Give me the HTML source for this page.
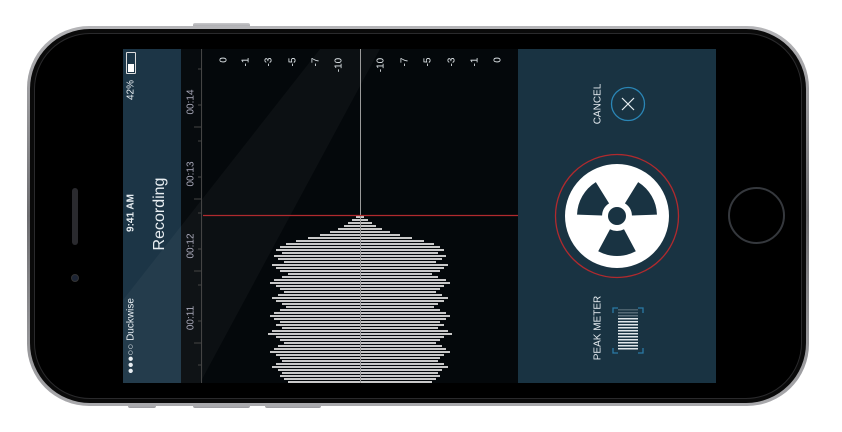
<!DOCTYPE html>
<html><head><meta charset="utf-8"><style>
*{margin:0;padding:0;box-sizing:border-box}
body{width:842px;height:432px;background:#fff;position:relative;overflow:hidden;font-family:"Liberation Sans",sans-serif}
.abs{position:absolute}
.rot{position:absolute;transform:translate(-50%,-50%) rotate(-90deg);white-space:nowrap;color:#e8eef2}
.btn{position:absolute;background:linear-gradient(#c9c9cc,#9a9a9e);border-radius:2px}
</style></head><body>
<div class="btn" style="left:193px;top:23px;width:57px;height:5px"></div>
<div class="btn" style="left:128px;top:403px;width:28px;height:5px"></div>
<div class="btn" style="left:193px;top:403px;width:57px;height:5px"></div>
<div class="btn" style="left:265px;top:403px;width:56px;height:5px"></div>
<div class="abs" style="left:27px;top:26px;width:782px;height:380px;border-radius:62px;background:linear-gradient(180deg,#b5b5b8,#6d6d70 50%,#a9a9ac);"></div>
<div class="abs" style="left:30px;top:29px;width:776px;height:374px;border-radius:60px;background:#0a0a0a"></div>
<div class="abs" style="left:34px;top:33px;width:768px;height:366px;border-radius:56px;background:#000;border:1px solid #2a2a2c"></div>
<div class="abs" style="left:72px;top:188px;width:6px;height:57px;border-radius:3px;background:#2a2a2e"></div>
<div class="abs" style="left:71px;top:274px;width:8px;height:8px;border-radius:50%;background:#1c2434;border:1px solid #333"></div>
<div class="abs" style="left:728px;top:187px;width:57px;height:57px;border-radius:50%;border:2px solid #35383d"></div>

<!-- screen -->
<div class="abs" style="left:123px;top:49px;width:58px;height:334px;background:#1c3546"></div>
<div class="abs" style="left:181px;top:49px;width:22px;height:334px;background:#070b0e"></div>
<div class="abs" style="left:203px;top:49px;width:315px;height:334px;background:#04080b"></div>
<div class="abs" style="left:518px;top:49px;width:198px;height:334px;background:#193342"></div>
<!-- glare -->
<svg class="abs" style="left:0;top:0" width="842" height="432"><polygon points="123,383 123,300 320,49 380,49 200,383" fill="#ffffff" opacity="0.035"/></svg>

<!-- ruler -->
<svg class="abs" style="left:181px;top:49px" width="22" height="334">
<line x1="20.5" y1="0" x2="20.5" y2="334" stroke="#444" stroke-width="1"/>
<g stroke="#444">
<line x1="17" x2="21" y1="20" y2="20"/><line x1="17" x2="21" y1="56" y2="56"/><line x1="13" x2="21" y1="78" y2="78"/>
<line x1="17" x2="21" y1="92" y2="92"/><line x1="17" x2="21" y1="128" y2="128"/><line x1="13" x2="21" y1="150" y2="150"/>
<line x1="17" x2="21" y1="164" y2="164"/><line x1="17" x2="21" y1="200" y2="200"/><line x1="13" x2="21" y1="222" y2="222"/>
<line x1="17" x2="21" y1="236" y2="236"/><line x1="17" x2="21" y1="272" y2="272"/><line x1="13" x2="21" y1="294" y2="294"/><line x1="17" x2="21" y1="316" y2="316"/></g>
</svg>
<div class="rot" style="left:191px;top:102px;font-size:10px;color:#aab">00:14</div>
<div class="rot" style="left:191px;top:174px;font-size:10px;color:#aab">00:13</div>
<div class="rot" style="left:191px;top:246px;font-size:10px;color:#aab">00:12</div>
<div class="rot" style="left:191px;top:318px;font-size:10px;color:#aab">00:11</div>

<!-- dB labels -->
<div class="rot" style="left:224px;top:60px;font-size:10px">0</div>
<div class="rot" style="left:246px;top:62px;font-size:10px">-1</div>
<div class="rot" style="left:269px;top:62px;font-size:10px">-3</div>
<div class="rot" style="left:293px;top:62px;font-size:10px">-5</div>
<div class="rot" style="left:316px;top:62px;font-size:10px">-7</div>
<div class="rot" style="left:339px;top:65px;font-size:10px">-10</div>
<div class="rot" style="left:381px;top:65px;font-size:10px">-10</div>
<div class="rot" style="left:405px;top:62px;font-size:10px">-7</div>
<div class="rot" style="left:428px;top:62px;font-size:10px">-5</div>
<div class="rot" style="left:452px;top:62px;font-size:10px">-3</div>
<div class="rot" style="left:475px;top:62px;font-size:10px">-1</div>
<div class="rot" style="left:498px;top:60px;font-size:10px">0</div>

<!-- waveform -->
<svg class="abs" style="left:0;top:0" width="842" height="432">
<g fill="#c9c9c9">
<rect x="356" y="216" width="8" height="2"/><rect x="352" y="219" width="16" height="2"/><rect x="348" y="222" width="24" height="2"/><rect x="344" y="225" width="32" height="2"/><rect x="338" y="228" width="44" height="2"/><rect x="330" y="231" width="60" height="2"/><rect x="320" y="234" width="80" height="2"/><rect x="308" y="237" width="104" height="2"/><rect x="296" y="240" width="128" height="2"/><rect x="286" y="243" width="148" height="2"/><rect x="280" y="246" width="160" height="2"/><rect x="276" y="249" width="168" height="2"/><rect x="282" y="252" width="156" height="2"/><rect x="274" y="255" width="172" height="2"/><rect x="278" y="258" width="164" height="2"/><rect x="284" y="261" width="152" height="2"/><rect x="272" y="264" width="176" height="2"/><rect x="276" y="267" width="168" height="2"/><rect x="280" y="270" width="160" height="2"/><rect x="288" y="273" width="144" height="2"/><rect x="282" y="276" width="156" height="2"/><rect x="274" y="279" width="172" height="2"/><rect x="270" y="282" width="180" height="2"/><rect x="276" y="285" width="168" height="2"/><rect x="280" y="288" width="160" height="2"/><rect x="284" y="291" width="152" height="2"/><rect x="278" y="294" width="164" height="2"/><rect x="272" y="297" width="176" height="2"/><rect x="276" y="300" width="168" height="2"/><rect x="282" y="303" width="156" height="2"/><rect x="286" y="306" width="148" height="2"/><rect x="280" y="309" width="160" height="2"/><rect x="274" y="312" width="172" height="2"/><rect x="270" y="315" width="180" height="2"/><rect x="274" y="318" width="172" height="2"/><rect x="280" y="321" width="160" height="2"/><rect x="276" y="324" width="168" height="2"/><rect x="282" y="327" width="156" height="2"/><rect x="272" y="330" width="176" height="2"/><rect x="268" y="333" width="184" height="2"/><rect x="276" y="336" width="168" height="2"/><rect x="280" y="339" width="160" height="2"/><rect x="284" y="342" width="152" height="2"/><rect x="278" y="345" width="164" height="2"/><rect x="274" y="348" width="172" height="2"/><rect x="270" y="351" width="180" height="2"/><rect x="276" y="354" width="168" height="2"/><rect x="280" y="357" width="160" height="2"/><rect x="282" y="360" width="156" height="2"/><rect x="276" y="363" width="168" height="2"/><rect x="272" y="366" width="176" height="2"/><rect x="278" y="369" width="164" height="2"/><rect x="282" y="372" width="156" height="2"/><rect x="280" y="375" width="160" height="2"/><rect x="284" y="378" width="152" height="2"/><rect x="288" y="381" width="144" height="2"/>
</g>
<line x1="360.5" y1="49" x2="360.5" y2="383" stroke="#9a9a9a" stroke-width="1"/>
<line x1="203" y1="215.5" x2="518" y2="215.5" stroke="#b02a2e" stroke-width="1.3"/>
</svg>

<!-- left panel text -->
<div class="abs" style="left:126px;top:52px;width:10px;height:22px;border:1px solid #ddd;border-radius:1px"></div>
<div class="abs" style="left:128px;top:64px;width:6px;height:8px;background:#fff"></div>
<div class="rot" style="left:131px;top:90px;font-size:10px">42%</div>
<div class="rot" style="left:131px;top:213px;font-size:10px;font-weight:bold">9:41 AM</div>
<div class="rot" style="left:131px;top:336px;font-size:10px">●●●○○ Duckwise</div>
<div class="rot" style="left:160px;top:214px;font-size:16px;font-weight:300">Recording</div>

<!-- right panel -->
<div class="rot" style="left:598px;top:104px;font-size:10px">CANCEL</div>
<svg class="abs" style="left:0;top:0" width="842" height="432">
<circle cx="628" cy="104" r="16.5" fill="none" stroke="#2a86b6" stroke-width="1.3"/>
<path d="M622 98 L634 110 M634 98 L622 110" stroke="#e8eef2" stroke-width="1.2"/>
<circle cx="617" cy="216" r="61.5" fill="none" stroke="#b02a2e" stroke-width="1.3"/>
<circle cx="617" cy="216" r="52" fill="#fff"/>
<g transform="translate(617,216)" fill="#193342">
<circle r="9"/>
<path id="bl" d="M7,13.2 L18.8,35.3 A40 40 0 0 1 -18.8,35.3 L-7,13.2 A15 15 0 0 0 7,13.2 Z"/>
<path transform="rotate(120)" d="M7,13.2 L18.8,35.3 A40 40 0 0 1 -18.8,35.3 L-7,13.2 A15 15 0 0 0 7,13.2 Z"/>
<path transform="rotate(240)" d="M7,13.2 L18.8,35.3 A40 40 0 0 1 -18.8,35.3 L-7,13.2 A15 15 0 0 0 7,13.2 Z"/>
</g>
<g fill="none" stroke="#2a7aa6" stroke-width="1.3">
<path d="M618 308 L613 308 L613 313"/><path d="M638 308 L643 308 L643 313"/>
<path d="M613 348 L613 353 L618 353"/><path d="M643 348 L643 353 L638 353"/>
</g>
<g fill="#dfe6ea">
<rect x="618" y="309" width="20" height="1.5" opacity=".25"/><rect x="618" y="312" width="20" height="1.5" opacity=".3"/><rect x="618" y="315" width="20" height="1.5" opacity=".35"/>
<rect x="618" y="318" width="20" height="1.5"/><rect x="618" y="321" width="20" height="1.5"/><rect x="618" y="324" width="20" height="1.5"/><rect x="618" y="327" width="20" height="1.5"/><rect x="618" y="330" width="20" height="1.5"/><rect x="618" y="333" width="20" height="1.5"/><rect x="618" y="336" width="20" height="1.5"/><rect x="618" y="339" width="20" height="1.5"/><rect x="618" y="342" width="20" height="1.5"/><rect x="618" y="345" width="20" height="1.5"/><rect x="618" y="348" width="20" height="1.5"/>
</g>
</svg>
<div class="rot" style="left:598px;top:328px;font-size:10px">PEAK METER</div>
</body></html>
